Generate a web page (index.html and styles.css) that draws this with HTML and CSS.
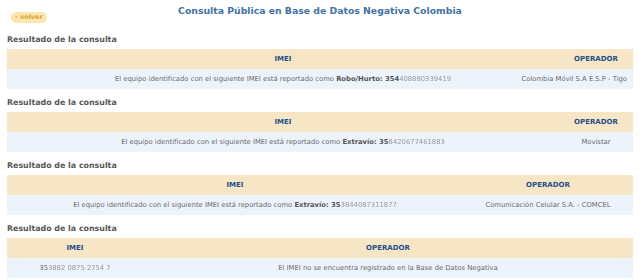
FILE: index.html
```html
<!DOCTYPE html>
<html lang="es">
<head>
<meta charset="utf-8">
<title>Consulta Pública en Base de Datos Negativa Colombia</title>
<link rel="stylesheet" href="styles.css">
</head>
<body>
<div class="page">
  <header class="top">
    <a class="back" href="#">&lsaquo; volver</a>
    <h1 class="title">Consulta Pública en Base de Datos Negativa Colombia</h1>
    <span class="spacer"></span>
  </header>

  <section class="result">
    <h2 class="result-title">Resultado de la consulta</h2>
    <div class="grid g1">
      <div class="th">IMEI</div>
      <div class="th">OPERADOR</div>
      <div class="td"><span>El equipo identificado con el siguiente IMEI está reportado como <b>Robo/Hurto: 354<span class="blur">408880339419</span></b></span></div>
      <div class="td op-end"><span>Colombia Móvil S.A E.S.P - Tigo</span></div>
    </div>
  </section>

  <section class="result">
    <h2 class="result-title">Resultado de la consulta</h2>
    <div class="grid g2">
      <div class="th">IMEI</div>
      <div class="th">OPERADOR</div>
      <div class="td"><span>El equipo identificado con el siguiente IMEI está reportado como <b>Extravío: 35<span class="blur">8420677461883</span></b></span></div>
      <div class="td"><span>Movistar</span></div>
    </div>
  </section>

  <section class="result">
    <h2 class="result-title">Resultado de la consulta</h2>
    <div class="grid g3">
      <div class="th">IMEI</div>
      <div class="th">OPERADOR</div>
      <div class="td"><span>El equipo identificado con el siguiente IMEI está reportado como <b>Extravío: 35<span class="blur">3844087311877</span></b></span></div>
      <div class="td"><span>Comunicación Celular S.A. - COMCEL</span></div>
    </div>
  </section>

  <section class="result">
    <h2 class="result-title">Resultado de la consulta</h2>
    <div class="grid g4">
      <div class="th">IMEI</div>
      <div class="th">OPERADOR</div>
      <div class="td"><span>35<span class="blur">3882 0875 2754 7</span></span></div>
      <div class="td"><span>El IMEI no se encuentra registrado en la Base de Datos Negativa</span></div>
    </div>
  </section>
</div>
</body>
</html>
```

FILE: styles.css
```css
html, body {
  margin: 0;
  padding: 0;
  background: #ffffff;
}

body {
  font-family: "DejaVu Sans", Verdana, sans-serif;
  color: #666666;
}

.page {
  width: 640px;
  padding: 0 7px;
  box-sizing: border-box;
}

.top {
  display: grid;
  grid-template-columns: 1fr auto 1fr;
  align-items: start;
  height: 34px;
}

.back {
  justify-self: start;
  margin: 12px 0 0 4px;
  height: 11px;
  padding: 0 4px;
  border-radius: 6px;
  background: #fbe7ad;
  color: #d5a23a;
  font-size: 6.5px;
  font-weight: bold;
  line-height: 11px;
  text-decoration: none;
}

.title {
  margin: 4px 0 0 0;
  font-size: 9.3px;
  line-height: 14px;
  font-weight: bold;
  color: #4272a6;
  white-space: nowrap;
}

.spacer {
  display: block;
}

.result {
  margin-bottom: 8px;
}

.result-title {
  margin: 0 0 3px 0;
  font-size: 7.9px;
  line-height: 12px;
  font-weight: bold;
  color: #585858;
}

.grid {
  display: grid;
  grid-template-rows: 20px 20px;
}

.g1 { grid-template-columns: 552px 74px; }
.g2 { grid-template-columns: 552px 74px; }
.g3 { grid-template-columns: 456px 170px; }
.g4 { grid-template-columns: 136px 490px; }

.th, .td {
  display: flex;
  align-items: center;
  justify-content: center;
  white-space: nowrap;
  min-width: 0;
}

.th {
  background: #f7e6c6;
  color: #1f4f8e;
  font-size: 7px;
  font-weight: bold;
}

.td {
  background: #edf3fb;
  color: #6a6a6a;
  font-size: 6.8px;
}

.td b {
  color: #555555;
}

.op-end {
  justify-content: flex-end;
  padding-right: 6px;
}

.blur {
  color: #9a9a9a;
  font-weight: normal;
  filter: blur(0.6px);
  display: inline-block;
}
```
